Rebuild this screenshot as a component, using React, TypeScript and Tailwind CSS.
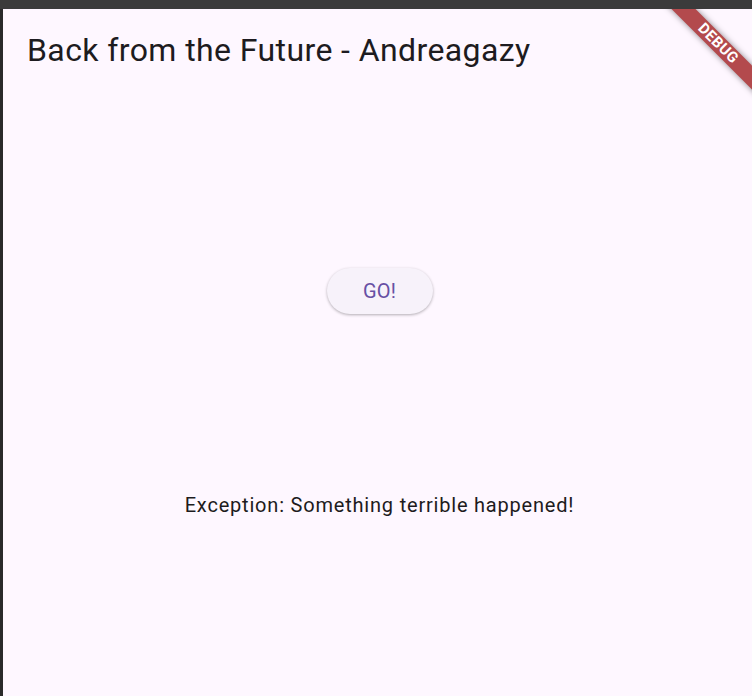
import React from 'react';

const DebugBanner: React.FC = () => (
  <div className="pointer-events-none absolute left-[650px] top-[26px] flex h-[17px] w-[130px] rotate-45 items-center justify-center bg-[#b34a4d] shadow-[0_0_6px_rgba(0,0,0,0.45)]">
    <span className="text-[15px] font-bold leading-none tracking-[0.4px] text-white [font-family:Roboto,'Liberation_Sans',sans-serif]">
      DEBUG
    </span>
  </div>
);

const App: React.FC = () => {
  return (
    <div className="h-[696px] w-[752px] overflow-hidden bg-[#3b3b3b] pt-[9px]">
      <div className="flex h-[687px] border-l-[3px] border-[#2a2a2a]">
        <div className="relative flex flex-1 flex-col overflow-hidden bg-[#fef7ff] [font-family:Roboto,'Liberation_Sans',sans-serif]">
          {/* App bar */}
          <header className="flex h-[82px] items-center pl-[24px]">
            <h1 className="text-[32px] font-normal leading-none tracking-[0.4px] text-[#1d1b20]">
              Back from the Future - Andreagazy
            </h1>
          </header>

          {/* Body */}
          <main className="flex flex-col items-center pl-[4px]">
            <button className="mt-[177px] h-[46px] w-[106px] rounded-full bg-[#f7f2fa] text-[20px] tracking-[0.2px] text-[#6750a4] shadow-[0_1px_3px_rgba(0,0,0,0.3)]">
              GO!
            </button>
            <p className="mt-[179px] text-[20px] leading-[24px] tracking-[0.8px] text-[#1d1b20]">
              Exception: Something terrible happened!
            </p>
          </main>

          <DebugBanner />
        </div>
      </div>
    </div>
  );
};

export default App;
